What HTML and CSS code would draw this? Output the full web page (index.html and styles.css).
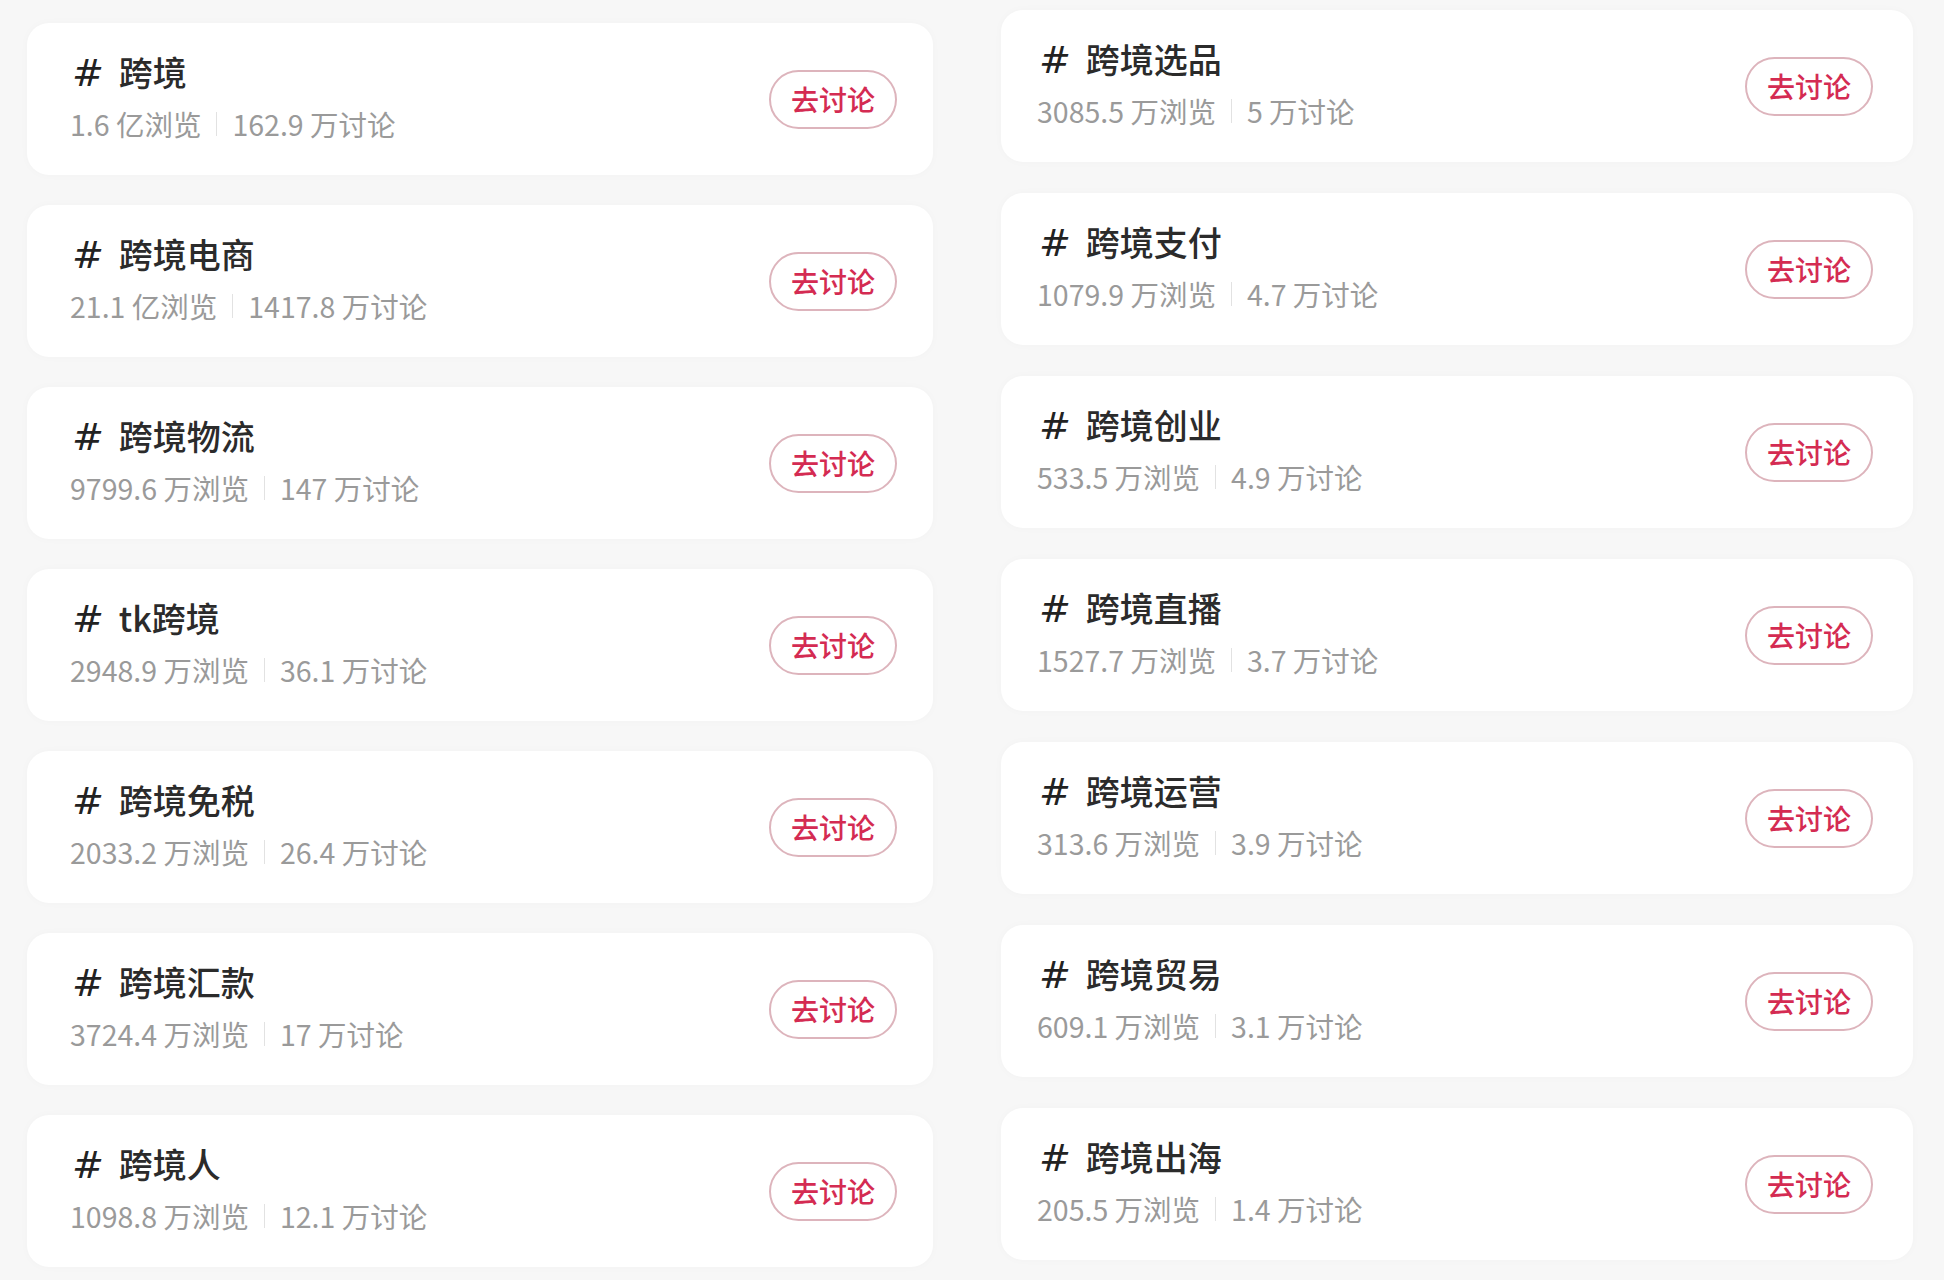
FILE: index.html
```html
<!DOCTYPE html>
<html lang="zh-CN">
<head>
    <meta charset="UTF-8">
    <meta name="viewport" content="width=device-width, initial-scale=1.0">
    <title>话题</title>
    <link rel="stylesheet" href="styles.css">
</head>
<body>

    <div class="topics">
        <div class="topic-col left">
            <div class="topic">
                <div class="topic-info">
                    <div class="topic-name"><span class="hash">#</span>跨境</div>
                    <div class="topic-stats"><span>1.6 亿浏览</span><i class="sep"></i><span>162.9 万讨论</span></div>
                </div>
                <button class="discuss-btn">去讨论</button>
            </div>
            <div class="topic">
                <div class="topic-info">
                    <div class="topic-name"><span class="hash">#</span>跨境电商</div>
                    <div class="topic-stats"><span>21.1 亿浏览</span><i class="sep"></i><span>1417.8 万讨论</span></div>
                </div>
                <button class="discuss-btn">去讨论</button>
            </div>
            <div class="topic">
                <div class="topic-info">
                    <div class="topic-name"><span class="hash">#</span>跨境物流</div>
                    <div class="topic-stats"><span>9799.6 万浏览</span><i class="sep"></i><span>147 万讨论</span></div>
                </div>
                <button class="discuss-btn">去讨论</button>
            </div>
            <div class="topic">
                <div class="topic-info">
                    <div class="topic-name"><span class="hash">#</span>tk跨境</div>
                    <div class="topic-stats"><span>2948.9 万浏览</span><i class="sep"></i><span>36.1 万讨论</span></div>
                </div>
                <button class="discuss-btn">去讨论</button>
            </div>
            <div class="topic">
                <div class="topic-info">
                    <div class="topic-name"><span class="hash">#</span>跨境免税</div>
                    <div class="topic-stats"><span>2033.2 万浏览</span><i class="sep"></i><span>26.4 万讨论</span></div>
                </div>
                <button class="discuss-btn">去讨论</button>
            </div>
            <div class="topic">
                <div class="topic-info">
                    <div class="topic-name"><span class="hash">#</span>跨境汇款</div>
                    <div class="topic-stats"><span>3724.4 万浏览</span><i class="sep"></i><span>17 万讨论</span></div>
                </div>
                <button class="discuss-btn">去讨论</button>
            </div>
            <div class="topic">
                <div class="topic-info">
                    <div class="topic-name"><span class="hash">#</span>跨境人</div>
                    <div class="topic-stats"><span>1098.8 万浏览</span><i class="sep"></i><span>12.1 万讨论</span></div>
                </div>
                <button class="discuss-btn">去讨论</button>
            </div>
        </div>

        <div class="topic-col right">
            <div class="topic">
                <div class="topic-info">
                    <div class="topic-name"><span class="hash">#</span>跨境选品</div>
                    <div class="topic-stats"><span>3085.5 万浏览</span><i class="sep"></i><span>5 万讨论</span></div>
                </div>
                <button class="discuss-btn">去讨论</button>
            </div>
            <div class="topic">
                <div class="topic-info">
                    <div class="topic-name"><span class="hash">#</span>跨境支付</div>
                    <div class="topic-stats"><span>1079.9 万浏览</span><i class="sep"></i><span>4.7 万讨论</span></div>
                </div>
                <button class="discuss-btn">去讨论</button>
            </div>
            <div class="topic">
                <div class="topic-info">
                    <div class="topic-name"><span class="hash">#</span>跨境创业</div>
                    <div class="topic-stats"><span>533.5 万浏览</span><i class="sep"></i><span>4.9 万讨论</span></div>
                </div>
                <button class="discuss-btn">去讨论</button>
            </div>
            <div class="topic">
                <div class="topic-info">
                    <div class="topic-name"><span class="hash">#</span>跨境直播</div>
                    <div class="topic-stats"><span>1527.7 万浏览</span><i class="sep"></i><span>3.7 万讨论</span></div>
                </div>
                <button class="discuss-btn">去讨论</button>
            </div>
            <div class="topic">
                <div class="topic-info">
                    <div class="topic-name"><span class="hash">#</span>跨境运营</div>
                    <div class="topic-stats"><span>313.6 万浏览</span><i class="sep"></i><span>3.9 万讨论</span></div>
                </div>
                <button class="discuss-btn">去讨论</button>
            </div>
            <div class="topic">
                <div class="topic-info">
                    <div class="topic-name"><span class="hash">#</span>跨境贸易</div>
                    <div class="topic-stats"><span>609.1 万浏览</span><i class="sep"></i><span>3.1 万讨论</span></div>
                </div>
                <button class="discuss-btn">去讨论</button>
            </div>
            <div class="topic">
                <div class="topic-info">
                    <div class="topic-name"><span class="hash">#</span>跨境出海</div>
                    <div class="topic-stats"><span>205.5 万浏览</span><i class="sep"></i><span>1.4 万讨论</span></div>
                </div>
                <button class="discuss-btn">去讨论</button>
            </div>
        </div>
    </div>

</body>
</html>
```

FILE: styles.css
```css
body {
    font-family: "Noto Sans CJK SC", "Noto Sans", sans-serif;
    margin: 0;
    padding: 0;
    background-color: #f7f7f7;
    height: 1280px;
    overflow: hidden;
}
.topics {
    display: flex;
    gap: 68px;
    padding: 0 31px 0 27px;
}
.topic-col {
    display: flex;
    flex-direction: column;
}
.topic-col.left {
    width: 906px;
    padding-top: 23px;
    gap: 30px;
}
.topic-col.right {
    width: 912px;
    padding-top: 10px;
    gap: 31px;
}
.topic {
    display: flex;
    align-items: center;
    justify-content: space-between;
    height: 152px;
    box-sizing: border-box;
    background-color: white;
    border-radius: 22px;
    box-shadow: 0 0 10px rgba(0, 0, 0, 0.025);
}
.left .topic {
    padding: 0 36px 0 43px;
}
.right .topic {
    padding: 0 40px 0 36px;
}
.topic-info {
    display: flex;
    flex-direction: column;
    gap: 9px;
    margin-top: -5px;
}
.topic-name {
    font-size: 34px;
    line-height: 44px;
    font-weight: 500;
    color: #2b2b2b;
}
.hash {
    display: inline-block;
    margin-left: 2px;
    margin-right: 15px;
    font-family: "DejaVu Sans", sans-serif;
    font-style: italic;
    font-weight: 400;
    font-size: 38px;
    line-height: 44px;
    color: #222;
}
.topic-stats {
    display: flex;
    align-items: center;
    font-size: 28.5px;
    line-height: 40px;
    color: #9a9a9a;
}
.sep {
    display: inline-block;
    width: 1px;
    height: 24px;
    margin: 0 15px;
    background-color: #e2e2e2;
}
.discuss-btn {
    width: 128px;
    height: 59px;
    border: 2px solid #ddb4bc;
    border-radius: 30px;
    background-color: white;
    color: #d42b52;
    font-family: "Noto Sans CJK SC", sans-serif;
    font-size: 28px;
    font-weight: 500;
    padding: 0;
    cursor: pointer;
}
```
